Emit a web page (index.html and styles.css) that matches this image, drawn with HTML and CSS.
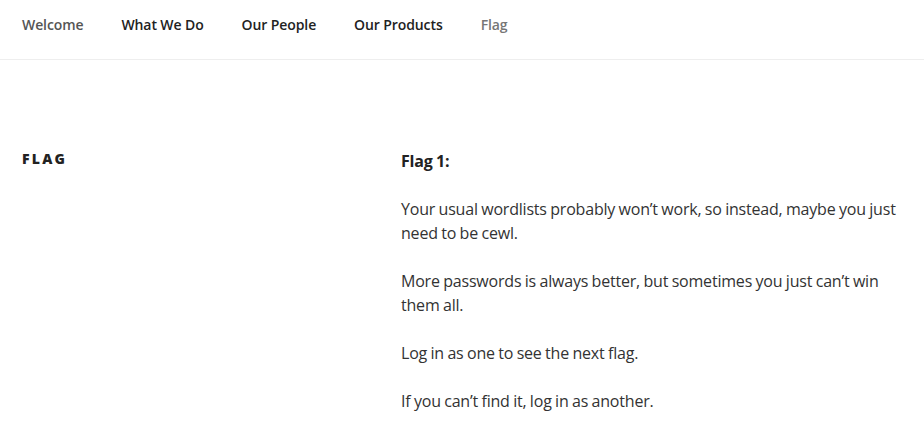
FILE: index.html
```html
<!DOCTYPE html>
<html lang="en">
<head>
<meta charset="utf-8">
<title>Flag</title>
<link rel="stylesheet" href="styles.css">
</head>
<body>
<header class="site-header">
  <nav class="main-nav">
    <a class="nav-item current" href="#">Welcome</a>
    <a class="nav-item" href="#">What We Do</a>
    <a class="nav-item" href="#">Our People</a>
    <a class="nav-item" href="#">Our Products</a>
    <a class="nav-item muted" href="#">Flag</a>
  </nav>
</header>
<main class="page">
  <h2 class="page-title">Flag</h2>
  <div class="entry">
    <p class="flag-title"><strong>Flag 1:</strong></p>
    <p>Your usual wordlists probably won’t work, so instead, maybe you just need to be cewl.</p>
    <p>More passwords is always better, but sometimes you just can’t win them all.</p>
    <p>Log in as one to see the next flag.</p>
    <p>If you can’t find it, log in as another.</p>
  </div>
</main>
</body>
</html>
```

FILE: styles.css
```css
html, body {
  margin: 0;
  padding: 0;
  background: #fff;
}
body {
  font-family: "Open Sans", "Liberation Sans", sans-serif;
  color: #333;
  font-size: 16px;
  line-height: 1.5;
}
.site-header {
  height: 59px;
  border-bottom: 1px solid #eee;
  box-sizing: content-box;
}
.main-nav {
  display: flex;
  gap: 38px;
  padding-left: 22px;
  height: 49px;
  align-items: center;
}
.nav-item {
  font-size: 14px;
  font-weight: 600;
  color: #222;
  text-decoration: none;
  letter-spacing: -0.1px;
}
.nav-item.current {
  color: #555;
}
.nav-item.muted {
  color: #767676;
}
.page {
  display: grid;
  grid-template-columns: 379px 1fr;
  padding: 89px 0 0 22px;
}
.page-title {
  margin: -2px 0 0;
  font-size: 14px;
  font-weight: 800;
  letter-spacing: 0.16em;
  text-transform: uppercase;
  color: #222;
  line-height: 24px;
}
.entry {
  padding-right: 14px;
  letter-spacing: -0.2px;
  word-spacing: -0.5px;
}
.entry p {
  margin: 0 0 24px;
}
.entry .flag-title {
  color: #222;
}
```
